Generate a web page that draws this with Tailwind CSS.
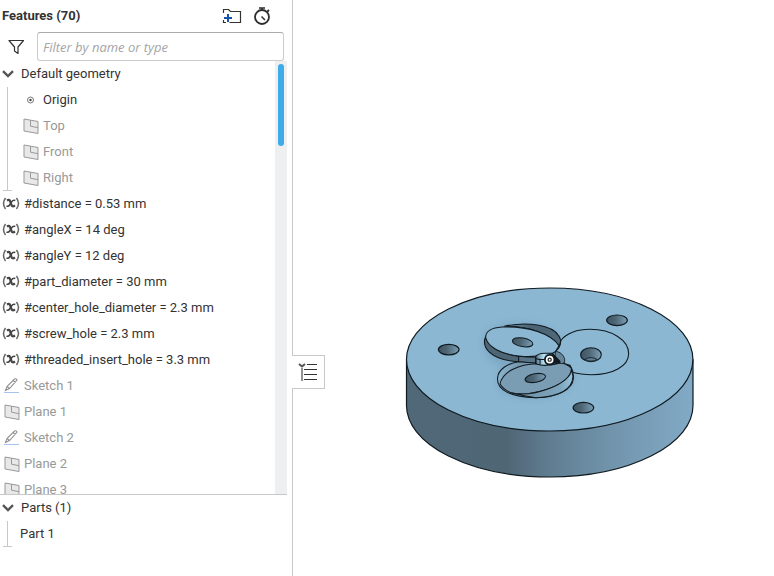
<!DOCTYPE html>
<html lang="en">
<head>
<meta charset="utf-8">
<meta name="viewport" content="width=device-width, initial-scale=1">
<title>Features</title>
<script src="https://cdn.jsdelivr.net/npm/@tailwindcss/browser@4"></script>
</head>
<body class="flex h-screen overflow-hidden bg-white font-['Roboto',sans-serif] text-[13px] text-[#333]">
<svg class="hidden" aria-hidden="true">
  <symbol id="chevron" viewBox="0 0 12 8"><path d="M1 1.200l5 4.800 5-4.800" fill="none" stroke="#555" stroke-width="2.400"/></symbol>
  <symbol id="plane" viewBox="0 0 16 16"><path d="M1 1l14 2.500v12L1 13z" fill="#e8e8e8" stroke="#999"/><path d="M7.500 2.200v6l7.500 1.500" fill="none" stroke="#999"/></symbol>
  <symbol id="pencil" viewBox="0 0 16 16"><path d="M1.500 12.500l1.500-4 7.500-7.500q2-.8 2.500 1.200l-7.500 8.300zM3 8.500l2.500 2M9 2.500l2.500 2" fill="none" stroke="#929292" stroke-width="1.100"/><path d="M0 14.500h15" stroke="#a9c3ee"/></symbol>
  <symbol id="variable" viewBox="0 0 18 16"><path d="M3.500 2Q-.5 7.500 3.500 13M14.500 2Q18.500 7.500 14.500 13" fill="none" stroke="#666" stroke-width="1.500"/><path d="M5 4.500q2.200-1.500 3 .5l1.700 4.500q.8 1.700 3.300 0" fill="none" stroke="#444" stroke-width="2.200"/><path d="M13.300 4.500q-2.300-1-3.800 1.500L8 8.500q-1.500 2.500-3.500 1.500" fill="none" stroke="#444" stroke-width="1.500"/></symbol>
</svg>

<aside class="relative flex w-[293px] shrink-0 flex-col border-r border-[#c8c8c8]">
  <header class="flex h-8 shrink-0 items-center pr-5 pl-0.5">
    <h1 class="flex-1 font-bold">Features (70)</h1>
    <button type="button" aria-label="Add folder" class="mr-2.5">
      <svg class="h-4 w-5" viewBox="0 0 20 16" fill="none"><path d="M1.500 5V1.500h5l2 2h10v11h-11M1.500 12v2.500H4" stroke="#333" stroke-width="1.200"/><path d="M6 6v8M2 10h8" stroke="#1651b0" stroke-width="2"/></svg>
    </button>
    <button type="button" aria-label="Regeneration times">
      <svg class="h-5 w-5" viewBox="0 0 20 20" fill="none" stroke="#2d2d2d"><circle cx="10" cy="11" r="7" stroke-width="1.800"/><path d="M7 2h6M10 2v2" stroke-width="1.600"/><path d="M15 6l2-2" stroke-width="1.800"/><path d="M9.500 10.500l3.500 3.500" stroke-width="1.500"/></svg>
    </button>
  </header>
  <div class="flex h-[29px] shrink-0 items-center pr-2 pl-2">
    <label for="filter" class="w-[29px]" aria-label="Filter"><svg class="h-4 w-4" viewBox="0 0 16 16" fill="none" stroke="#333"><path d="M1 1.500h14.500L10 8v6.500L6.500 12V8z" stroke-width="1.200" stroke-linejoin="round"/></svg></label>
    <input id="filter" type="text" placeholder="Filter by name or type" class="h-[29px] min-w-0 flex-1 rounded-[3px] border border-[#ccc] border-t-[#aaa] px-[5px] font-['Open_Sans',sans-serif] text-[13px] placeholder:text-[#a5a5a5] placeholder:italic">
  </div>
  <div class="mr-[5px] flex min-h-0 flex-1 border-b border-[#c8c8c8]">
    <ul class="min-w-0 flex-1 overflow-hidden leading-[26px] whitespace-nowrap">
      <li>
        <button type="button" class="flex h-[26px] items-center gap-[7px] pl-0.5"><svg class="h-2 w-3"><use href="#chevron"/></svg>Default geometry</button>
        <ul class="ml-[7px] border-l border-[#c8c8c8] relative after:absolute after:bottom-0 after:-left-[5px] after:w-[9px] after:border-b after:border-[#c8c8c8]">
          <li class="flex h-[26px] items-center gap-1 pl-[15px]"><svg class="h-4 w-4" viewBox="0 0 16 16"><circle cx="7.500" cy="8" r="3" fill="none" stroke="#777"/><circle cx="7.500" cy="8" r="1.200" fill="#444"/></svg>Origin</li>
          <li class="flex h-[26px] items-center gap-1 pl-[15px] text-[#999]"><svg class="h-4 w-4"><use href="#plane"/></svg>Top</li>
          <li class="flex h-[26px] items-center gap-1 pl-[15px] text-[#999]"><svg class="h-4 w-4"><use href="#plane"/></svg>Front</li>
          <li class="flex h-[26px] items-center gap-1 pl-[15px] text-[#999]"><svg class="h-4 w-4"><use href="#plane"/></svg>Right</li>
        </ul>
      </li>
      <li class="flex h-[26px] items-center gap-1 pl-0.5"><svg class="h-4 w-[18px]"><use href="#variable"/></svg>#distance = 0.53 mm</li>
      <li class="flex h-[26px] items-center gap-1 pl-0.5"><svg class="h-4 w-[18px]"><use href="#variable"/></svg>#angleX = 14 deg</li>
      <li class="flex h-[26px] items-center gap-1 pl-0.5"><svg class="h-4 w-[18px]"><use href="#variable"/></svg>#angleY = 12 deg</li>
      <li class="flex h-[26px] items-center gap-1 pl-0.5"><svg class="h-4 w-[18px]"><use href="#variable"/></svg>#part_diameter = 30 mm</li>
      <li class="flex h-[26px] items-center gap-1 pl-0.5"><svg class="h-4 w-[18px]"><use href="#variable"/></svg>#center_hole_diameter = 2.3 mm</li>
      <li class="flex h-[26px] items-center gap-1 pl-0.5"><svg class="h-4 w-[18px]"><use href="#variable"/></svg>#screw_hole = 2.3 mm</li>
      <li class="flex h-[26px] items-center gap-1 pl-0.5"><svg class="h-4 w-[18px]"><use href="#variable"/></svg>#threaded_insert_hole = 3.3 mm</li>
      <li class="flex h-[26px] items-center gap-1 pl-1 text-[#999]"><svg class="h-4 w-4"><use href="#pencil"/></svg>Sketch 1</li>
      <li class="flex h-[26px] items-center gap-1 pl-1 text-[#999]"><svg class="h-4 w-4"><use href="#plane"/></svg>Plane 1</li>
      <li class="flex h-[26px] items-center gap-1 pl-1 text-[#999]"><svg class="h-4 w-4"><use href="#pencil"/></svg>Sketch 2</li>
      <li class="flex h-[26px] items-center gap-1 pl-1 text-[#999]"><svg class="h-4 w-4"><use href="#plane"/></svg>Plane 2</li>
      <li class="flex h-[26px] items-center gap-1 pl-1 text-[#999]"><svg class="h-4 w-4"><use href="#plane"/></svg>Plane 3</li>
    </ul>
    <div class="w-3 shrink-0 bg-[#eeeff1] px-[3px] pt-[3px]"><div class="h-[82px] rounded-full bg-[#40abe9]"></div></div>
  </div>
  <section class="h-[81px] shrink-0 leading-[26px]">
    <button type="button" class="flex h-[26px] items-center gap-[7px] pl-0.5"><svg class="h-2 w-3"><use href="#chevron"/></svg>Parts (1)</button>
    <ul class="relative ml-[7px] border-l border-[#c8c8c8] after:absolute after:bottom-0 after:-left-[5px] after:w-[9px] after:border-b after:border-[#c8c8c8]">
      <li class="h-[26px] pl-3">Part 1</li>
    </ul>
  </section>
  <button type="button" aria-label="Toggle feature list" class="absolute top-[355px] left-[292px] z-10 flex h-[34px] w-[33px] items-center justify-center border border-l-0 border-[#c8c8c8] bg-white">
    <svg class="h-5 w-5" viewBox="0 0 20 20" fill="none"><path d="M1 2l3 2.500L7 2" stroke="#555" stroke-width="2"/><path d="M4 6v13" stroke="#929292" stroke-width="2"/><path d="M9 2.500h10M6 7.500h13M6 12.500h13M6 17.500h13" stroke="#333"/></svg>
  </button>
</aside>

<main class="min-w-0 flex-1">
  <svg class="h-full w-full" viewBox="293 0 481 576" role="img" aria-label="Part 1 model">
    <defs>
      <linearGradient id="side" gradientUnits="userSpaceOnUse" x1="406" x2="693" y1="0" y2="0"><stop offset="0" stop-color="#506878"/><stop offset=".35" stop-color="#4f6675"/><stop offset=".5" stop-color="#5f7d91"/><stop offset=".7" stop-color="#7093aa"/><stop offset="1" stop-color="#82aac6"/></linearGradient>
      <linearGradient id="hole"><stop stop-color="#3f5462"/><stop offset=".4" stop-color="#4d6574"/><stop offset="1" stop-color="#7b9fb6"/></linearGradient>
      <linearGradient id="wall"><stop stop-color="#7397ae"/><stop offset=".45" stop-color="#4a6271"/><stop offset="1" stop-color="#50697a"/></linearGradient>
      <linearGradient id="lip"><stop stop-color="#8ab4ce"/><stop offset=".3" stop-color="#7597ac"/><stop offset=".8" stop-color="#7fa6c0"/><stop offset="1" stop-color="#9bc5e0"/></linearGradient>
      <linearGradient id="hub"><stop stop-color="#577487"/><stop offset=".35" stop-color="#b9e4f9"/><stop offset=".6" stop-color="#577487"/><stop offset="1" stop-color="#3c515e"/></linearGradient>
      <filter id="soft" x="-20%" y="-20%" width="140%" height="140%"><feGaussianBlur stdDeviation="12"/></filter>
    </defs>
    <g stroke="#101a20" stroke-width="1.200" stroke-linejoin="round">
      <path d="M406.500 359.500V405.500A143.200 71.500 0 0 0 693 405.500V359.500z" fill="url(#side)"/>
      <ellipse cx="549.700" cy="359.500" rx="143.200" ry="71.500" fill="#8bb7d3"/>
      <ellipse cx="617" cy="320.300" rx="10.300" ry="5.300" fill="url(#hole)"/>
      <ellipse cx="448.700" cy="349.600" rx="10.300" ry="5.300" fill="url(#hole)"/>
      <ellipse cx="583.400" cy="407.700" rx="10.300" ry="5.300" fill="url(#hole)"/>
    </g>
    <g transform="translate(470 310) scale(.3333)" stroke="#101a20" stroke-width="3.200" stroke-linejoin="round" stroke-linecap="round">
      <path d="M42 85C60 25 230 30 273 88L310 190C325 260 150 290 90 238Q72 205 100 170Q35 145 42 85z" fill="#668da7" opacity=".4" stroke="none" filter="url(#soft)"/>
      <path d="M272 93C287 69 323 58 360 58C427 58 476 91 476 131C476 169 427 194 365 194Q332 194 307 187L300 166L275 158L257 124Q273 110 272 93z" fill="#8bb7d3"/>
      <path d="M103 49C170 33 248 45 266 77Q272 86 272 94L267 109C244 70 174 49 103 49z" fill="url(#wall)"/>
      <path d="M47 80C42 89 43 101 46 110C59 138 100 153 146 155V139C96 132 57 116 47 80z" fill="#4d6575"/>
      <path d="M47 83C46 64 66 53 96 51C173 47 245 72 267 107L257 124Q246 135 199 138Q178 141 146 138C90 131 54 111 47 83z" fill="#8bb7d3"/>
      <path d="M146 139Q170 142 199 142L201 160Q178 159 146 155z" fill="#597486"/>
      <path d="M146 155C112 160 85 179 83 202C78 239 121 261 194 263C261 263 308 238 310 206Q312 185 301 167z" fill="url(#lip)"/>
      <path d="M199 161C150 162 97 184 90 222Q102 241 126 249C180 263 307 226 305 176Q301 168 275 158L243 165z" fill="#7b9db4"/>
      <path d="M126 249Q157 257 198 263C265 260 307 240 309 199L304 177C306 221 190 263 126 249z" fill="url(#lip)"/>
      <path d="M258 123Q288 132 284 158L274 161L255 151z" fill="#668599" stroke-width="2.500"/>
      <path d="M197 140Q205 129 226 130H246Q260 143 270 159L246 163Q220 170 198 161z" fill="url(#hub)"/>
      <path d="M200 146Q208 150 228 148M210 149V163M197 141V160" fill="none"/>
      <path d="M248 132L270 154L266 159L248 155z" fill="#101a20"/>
      <ellipse cx="158" cy="97" rx="31" ry="13" transform="rotate(10 158 97)" fill="url(#hole)"/>
      <ellipse cx="196" cy="204" rx="31" ry="13" transform="rotate(-10 196 204)" fill="url(#hole)"/>
      <ellipse cx="363" cy="134" rx="31" ry="21" fill="url(#hole)"/>
      <path d="M344 149Q363 136 382 149Q363 158 344 149z" fill="#5f7e92" stroke-width="2.600"/>
      <circle cx="239" cy="149" r="17" fill="#101a20" stroke="none"/><circle cx="239" cy="149" r="9" fill="#222" stroke="#fff" stroke-width="5"/><circle cx="239" cy="149" r="3" fill="#fff" stroke="none"/>
    </g>
  </svg>
</main>
</body>
</html>
